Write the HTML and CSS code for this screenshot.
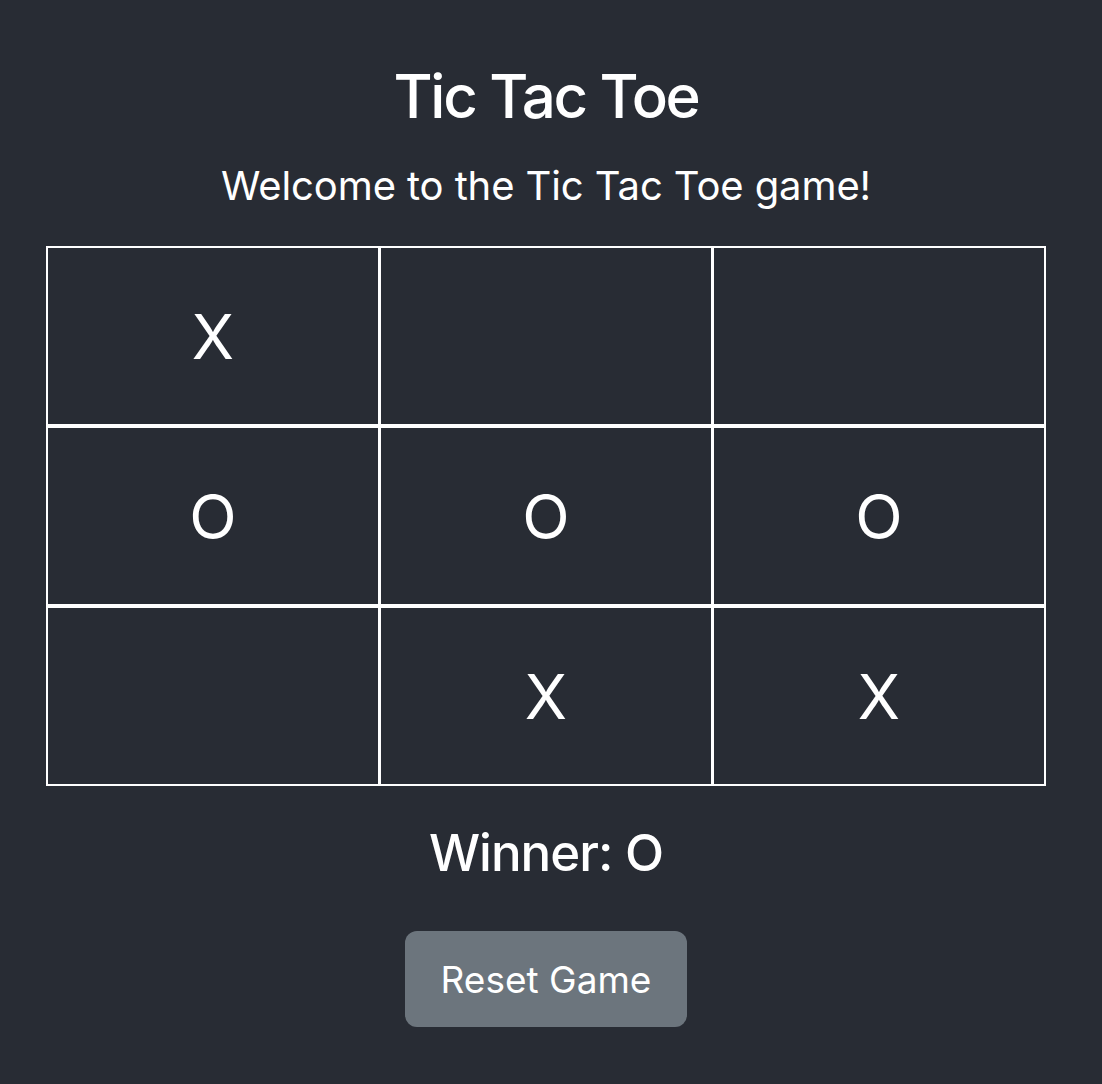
FILE: index.html
```html
<!DOCTYPE html>
<html lang="en">
<head>
<meta charset="utf-8">
<title>Tic Tac Toe</title>
<link rel="stylesheet" href="styles.css">
</head>
<body>
<main class="game">
  <h1 class="title">Tic Tac Toe</h1>
  <p class="subtitle">Welcome to the Tic Tac Toe game!</p>
  <div class="board">
    <div class="cell">X</div>
    <div class="cell"></div>
    <div class="cell"></div>
    <div class="cell">O</div>
    <div class="cell">O</div>
    <div class="cell">O</div>
    <div class="cell"></div>
    <div class="cell">X</div>
    <div class="cell">X</div>
  </div>
  <h2 class="status">Winner: O</h2>
  <button class="reset" type="button">Reset Game</button>
</main>
</body>
</html>
```
FILE: styles.css
```css
html, body {
  margin: 0;
  padding: 0;
  background: #282c34;
}
body {
  font-family: Inter, "Noto Sans", sans-serif;
  color: #ffffff;
  height: 1084px;
}
.game {
  width: 1000px;
  margin-left: 46px;
  display: flex;
  flex-direction: column;
  align-items: center;
  padding-top: 60px;
}
.title {
  margin: 0;
  font-size: 60px;
  line-height: 72px;
  font-weight: 500;
  letter-spacing: -2.3px;
}
.subtitle {
  margin: 30px 0 0;
  font-size: 40px;
  line-height: 48px;
  font-weight: 400;
  letter-spacing: -0.1px;
}
.board {
  margin-top: 36px;
  width: 1000px;
  box-sizing: border-box;
  display: grid;
  grid-template-columns: repeat(3, 1fr);
  grid-template-rows: repeat(3, 176px);
  column-gap: 3px;
  row-gap: 4px;
  background: #ffffff;
  border: 2px solid #ffffff;
}
.cell {
  background: #282c34;
  display: flex;
  align-items: center;
  justify-content: center;
  font-size: 62px;
  font-weight: 400;
}
.status {
  margin: 36px 0 0;
  font-size: 51px;
  line-height: 62px;
  font-weight: 500;
  letter-spacing: -1px;
}
.reset {
  margin-top: 47px;
  width: 282px;
  height: 96px;
  border: none;
  border-radius: 12px;
  background: #6c757d;
  color: #ffffff;
  font-family: Inter, "Noto Sans", sans-serif;
  font-size: 37px;
  font-weight: 400;
  padding: 0;
}
```
